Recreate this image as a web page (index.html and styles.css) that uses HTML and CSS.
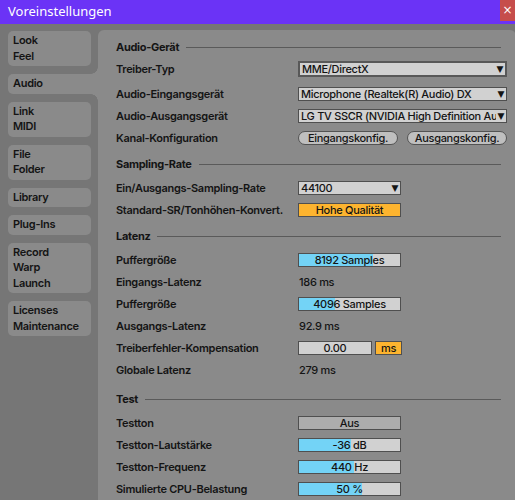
FILE: index.html
```html
<!DOCTYPE html>
<html lang="de">
<head>
<meta charset="utf-8">
<title>Voreinstellungen</title>
<link rel="stylesheet" href="styles.css">
</head>
<body>
<div class="titlebar">
  <span class="title">Voreinstellungen</span>
  <div class="close">×</div>
</div>
<div class="window">
  <nav class="tabs">
    <div class="tab">Look<br>Feel</div>
    <div class="tab active">Audio</div>
    <div class="tab">Link<br>MIDI</div>
    <div class="tab">File<br>Folder</div>
    <div class="tab">Library</div>
    <div class="tab">Plug-Ins</div>
    <div class="tab">Record<br>Warp<br>Launch</div>
    <div class="tab">Licenses<br>Maintenance</div>
  </nav>
  <main class="panel">
    <div class="header first"><span>Audio-Gerät</span><i class="rule"></i></div>
    <div class="row gap-after"><span class="label">Treiber-Typ</span><div class="select focus"><span class="sel-text">MME/DirectX</span><span class="arrow">▼</span></div></div>
    <div class="row"><span class="label">Audio-Eingangsgerät</span><div class="select"><span class="sel-text">Microphone (Realtek(R) Audio) DX</span><span class="arrow">▼</span></div></div>
    <div class="row"><span class="label">Audio-Ausgangsgerät</span><div class="select"><span class="sel-text">LG TV SSCR (NVIDIA High Definition Audio)</span><span class="arrow">▼</span></div></div>
    <div class="row"><span class="label">Kanal-Konfiguration</span><div class="buttons"><span class="pill">Eingangskonfig.</span><span class="pill">Ausgangskonfig.</span></div></div>

    <div class="header"><span>Sampling-Rate</span><i class="rule"></i></div>
    <div class="row"><span class="label">Ein/Ausgangs-Sampling-Rate</span><div class="select short"><span class="sel-text">44100</span><span class="arrow">▼</span></div></div>
    <div class="row"><span class="label">Standard-SR/Tonhöhen-Konvert.</span><div class="box short orange">Hohe Qualität</div></div>

    <div class="header"><span>Latenz</span><i class="rule"></i></div>
    <div class="row"><span class="label">Puffergröße</span><div class="box short"><i class="fill" style="width:73%"></i><span class="val">8192 Samples</span></div></div>
    <div class="row"><span class="label">Eingangs-Latenz</span><span class="plain">186 ms</span></div>
    <div class="row"><span class="label">Puffergröße</span><div class="box short"><i class="fill" style="width:36%"></i><span class="val">4096 Samples</span></div></div>
    <div class="row"><span class="label">Ausgangs-Latenz</span><span class="plain">92.9 ms</span></div>
    <div class="row"><span class="label">Treiberfehler-Kompensation</span><div class="pair"><div class="box comp"><span class="val">0.00</span></div><div class="box unit orange">ms</div></div></div>
    <div class="row"><span class="label">Globale Latenz</span><span class="plain">279 ms</span></div>

    <div class="header test"><span>Test</span><i class="rule"></i></div>
    <div class="row"><span class="label">Testton</span><div class="box short grey">Aus</div></div>
    <div class="row"><span class="label">Testton-Lautstärke</span><div class="box short"><i class="fill" style="width:51%"></i><span class="val">-36 dB</span></div></div>
    <div class="row"><span class="label">Testton-Frequenz</span><div class="box short"><i class="fill" style="width:54%"></i><span class="val">440 Hz</span></div></div>
    <div class="row"><span class="label">Simulierte CPU-Belastung</span><div class="box short"><i class="fill" style="width:62%"></i><span class="val">50 %</span></div></div>
  </main>
</div>
</body>
</html>
```
FILE: styles.css
```css
html, body {
  margin: 0;
  padding: 0;
  height: 100%;
  overflow: hidden;
}
body {
  background: #767676;
  font-family: "Inter", "Noto Sans", sans-serif;
  color: #141414;
  width: 515px;
  height: 500px;
}
.titlebar {
  height: 24px;
  background: #6b33f6;
  display: flex;
  align-items: flex-start;
  justify-content: space-between;
}
.title {
  color: #fff;
  font-family: "Noto Sans", "Open Sans", sans-serif;
  font-size: 13px;
  line-height: 22px;
  padding-left: 8px;
}
.close {
  width: 15px;
  height: 21px;
  background: #c64d4b;
  color: #fff;
  font-family: "DejaVu Sans", sans-serif;
  font-size: 12px;
  line-height: 21px;
  text-align: center;
}
.window {
  display: flex;
  padding-top: 6px;
  height: 470px;
}
.tabs {
  display: flex;
  flex-direction: column;
  gap: 8px;
  padding: 1px 0 0 8px;
  width: 90px;
  flex: none;
}
.tab {
  width: 78px;
  background: #8a8a8a;
  border-radius: 5px;
  font-size: 11px;
  font-weight: 600;
  letter-spacing: -0.3px;
  line-height: 15.5px;
  padding: 2px 0 2px 5px;
}
.tab.active {
  width: 85px;
  border-radius: 5px 0 0 5px;
  position: relative;
}
.tab.active::before,
.tab.active::after {
  content: "";
  position: absolute;
  right: 0;
  width: 7px;
  height: 7px;
}
.tab.active::before {
  top: -7px;
  background: radial-gradient(circle at 0 0, transparent 6.5px, #8a8a8a 7px);
}
.tab.active::after {
  bottom: -7px;
  background: radial-gradient(circle at 0 100%, transparent 6.5px, #8a8a8a 7px);
}
.panel {
  flex: 1;
  margin-right: 3px;
  background: #8a8a8a;
  border-radius: 6px 6px 0 0;
  padding: 0 9px 0 18px;
  font-size: 11px;
  font-weight: 600;
  letter-spacing: -0.3px;
}
.header {
  display: flex;
  align-items: center;
  height: 22px;
  margin: 4px 6px 2px 0;
  font-weight: 700;
}
.header.first {
  margin-top: 6px;
  margin-bottom: 0;
}
.header.test {
  margin-top: 7px;
}
.rule {
  display: block;
  flex: 1;
  height: 1px;
  background: #5a5a5a;
  margin-left: 7px;
}
.row {
  display: grid;
  grid-template-columns: 182px 1fr;
  align-items: center;
  height: 22px;
}
.row.gap-after {
  margin-bottom: 3px;
}
.label {
  white-space: nowrap;
}
.select {
  display: flex;
  align-items: center;
  height: 12px;
  border: 1px solid #4f4f4f;
  background: #d1d1d1;
  padding: 0 2px 0 2px;
  overflow: hidden;
  font-weight: 500;
}
.select.focus {
  border: 2px solid #585858;
  height: 12px;
}
.sel-text {
  flex: 1;
  min-width: 0;
  white-space: nowrap;
  overflow: hidden;
  line-height: 12px;
}
.arrow {
  flex: none;
  font-family: "DejaVu Sans", sans-serif;
  font-size: 9px;
  line-height: 12px;
  margin-left: 1px;
}
.select.short {
  width: 97px;
}
.buttons {
  display: flex;
  gap: 9px;
}
.pill {
  width: 98px;
  height: 12px;
  line-height: 12px;
  text-align: center;
  border: 1px solid #535353;
  border-radius: 7px;
  background: #bfbfbf;
  font-weight: 500;
}
.box {
  position: relative;
  height: 12px;
  line-height: 12px;
  border: 1px solid #4f4f4f;
  background: #d1d1d1;
  text-align: center;
  padding: 0 2px;
  overflow: hidden;
  font-weight: 500;
}
.box.short {
  width: 97px;
}
.orange {
  background: #fdb42f;
}
.grey {
  background: #adadad;
}
.fill {
  display: block;
  position: absolute;
  left: 0;
  top: 0;
  bottom: 0;
  background: #73d3f6;
}
.val {
  position: relative;
}
.pair {
  display: flex;
  gap: 3px;
}
.box.comp {
  width: 68px;
}
.box.unit {
  width: 21px;
}
.plain {
  padding-left: 1px;
  font-weight: 500;
}
```
